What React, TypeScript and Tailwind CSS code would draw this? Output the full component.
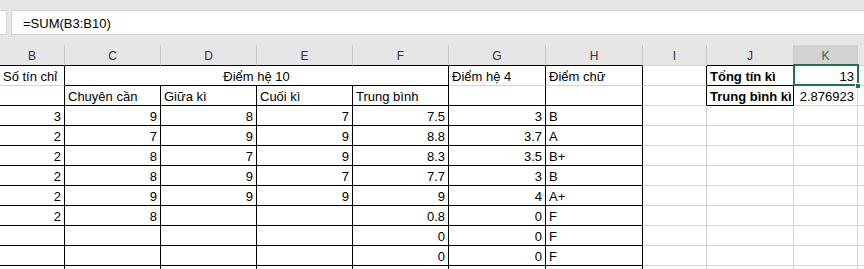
import React from "react";

type Cell = {
  t?: string;
  a?: "l" | "r" | "c";
  r: "k" | "g" | "n";
  b: "k" | "g";
  bold?: boolean;
  span?: 1 | 4;
  sel?: boolean;
};

const RC: Record<string, string> = {
  k: "border-r-black",
  g: "border-r-[#d4d4d4]",
  n: "border-r-transparent",
};
const BC: Record<string, string> = {
  k: "border-b-black",
  g: "border-b-[#d4d4d4]",
};
const AL: Record<string, string> = {
  l: "justify-start",
  r: "justify-end",
  c: "justify-center",
};

const GRID =
  "grid grid-cols-[65px_96px_96px_96px_96px_97px_97px_64px_87px_64px_1fr]";

const headers: { l: string; b: string; sel?: boolean }[] = [
  { l: "B", b: "border-b-black" },
  { l: "C", b: "border-b-black" },
  { l: "D", b: "border-b-black" },
  { l: "E", b: "border-b-black" },
  { l: "F", b: "border-b-black" },
  { l: "G", b: "border-b-black" },
  { l: "H", b: "border-b-black" },
  { l: "I", b: "border-b-[#d4d4d4]" },
  { l: "J", b: "border-b-black" },
  { l: "K", b: "border-b-[#217346]", sel: true },
  { l: "", b: "border-b-[#d4d4d4]" },
];

const data: (string | undefined)[][] = [
  ["3", "9", "8", "7", "7.5", "3", "B"],
  ["2", "7", "9", "9", "8.8", "3.7", "A"],
  ["2", "8", "7", "9", "8.3", "3.5", "B+"],
  ["2", "8", "9", "7", "7.7", "3", "B"],
  ["2", "9", "9", "9", "9", "4", "A+"],
  ["2", "8", "", "", "0.8", "0", "F"],
  ["", "", "", "", "0", "0", "F"],
  ["", "", "", "", "0", "0", "F"],
];

function Row({ cells, h = "h-[20px]" }: { cells: Cell[]; h?: string }) {
  return (
    <div className={`${GRID} ${h}`}>
      {cells.map((c, i) => (
        <div
          key={i}
          className={`relative flex items-end overflow-visible whitespace-nowrap border-r border-b px-[3px] pb-[1px] text-[13px] leading-[15px] text-black ${
            RC[c.r]
          } ${BC[c.b]} ${AL[c.a ?? "l"]} ${c.bold ? "font-bold" : ""} ${
            c.span === 4 ? "col-span-4" : ""
          } ${c.sel ? "z-10" : ""}`}
        >
          {c.t}
          {c.sel && (
            <>
              <div className="pointer-events-none absolute -left-[1px] -top-[2px] -right-[2px] -bottom-[1px] border-2 border-[#217346]" />
              <div className="absolute -right-[4px] -bottom-[4px] h-[6px] w-[6px] border border-white bg-[#217346]" />
            </>
          )}
        </div>
      ))}
    </div>
  );
}

export default function App() {
  const row1: Cell[] = [
    { t: "Số tín chỉ", r: "k", b: "g" },
    { t: "Điểm hệ 10", a: "c", r: "k", b: "k", span: 4 },
    { t: "Điểm hệ 4", r: "k", b: "g" },
    { t: "Điểm chữ", r: "k", b: "g" },
    { r: "k", b: "g" },
    { t: "Tổng tín kì", r: "k", b: "k", bold: true },
    { t: "13", a: "r", r: "g", b: "g", sel: true },
    { r: "n", b: "g" },
  ];
  const row2: Cell[] = [
    { r: "k", b: "k" },
    { t: "Chuyên cần", r: "k", b: "k" },
    { t: "Giữa kì", r: "k", b: "k" },
    { t: "Cuối kì", r: "k", b: "k" },
    { t: "Trung bình", r: "k", b: "k" },
    { r: "k", b: "k" },
    { r: "k", b: "k" },
    { r: "k", b: "g" },
    { t: "Trung bình kì", r: "k", b: "k", bold: true },
    { t: "2.876923", a: "r", r: "g", b: "g" },
    { r: "n", b: "g" },
  ];
  const dataRows: Cell[][] = data.map((d) => [
    ...d.slice(0, 6).map(
      (v): Cell => ({ t: v, a: "r", r: "k", b: "k" })
    ),
    { t: d[6], a: "l", r: "k", b: "k" },
    { r: "g", b: "g" },
    { r: "g", b: "g" },
    { r: "g", b: "g" },
    { r: "n", b: "g" },
  ]);
  const lastRow: Cell[] = [
    { r: "k", b: "g" },
    { r: "k", b: "g" },
    { r: "k", b: "g" },
    { r: "k", b: "g" },
    { r: "k", b: "g" },
    { r: "k", b: "g" },
    { r: "k", b: "g" },
    { r: "g", b: "g" },
    { r: "g", b: "g" },
    { r: "g", b: "g" },
    { r: "n", b: "g" },
  ];

  return (
    <div
      className="h-[269px] w-[864px] overflow-hidden bg-white"
      style={{ fontFamily: '"Liberation Sans", Arial, sans-serif' }}
    >
      {/* formula bar area */}
      <div className="flex h-[45px] gap-[4px] bg-[#e6e6e6] pt-[10px]">
        <div className="h-[25px] w-[7px] border border-l-0 border-[#d4d4d4] bg-white" />
        <div className="flex h-[25px] flex-1 items-start border border-r-0 border-[#d4d4d4] bg-white pl-[11px] pt-[5px] text-[13px] leading-[15px] text-black">
          =SUM(B3:B10)
        </div>
      </div>
      {/* column headers */}
      <div className={`${GRID} h-[21px] bg-[#e6e6e6]`}>
        {headers.map((h, i) => (
          <div
            key={i}
            className={`flex items-center justify-center border-b pt-[1px] text-[12px] leading-[14px] ${
              h.b
            } ${
              h.sel
                ? "bg-[#d2d2d2] text-[#217346]"
                : "text-[#333333]"
            } ${i < 10 ? "border-r border-r-[#c8c8c8]" : ""}`}
          >
            {h.l}
          </div>
        ))}
      </div>
      <Row cells={row1} />
      <Row cells={row2} />
      {dataRows.map((r, i) => (
        <Row key={i} cells={r} />
      ))}
      <Row cells={lastRow} />
    </div>
  );
}
